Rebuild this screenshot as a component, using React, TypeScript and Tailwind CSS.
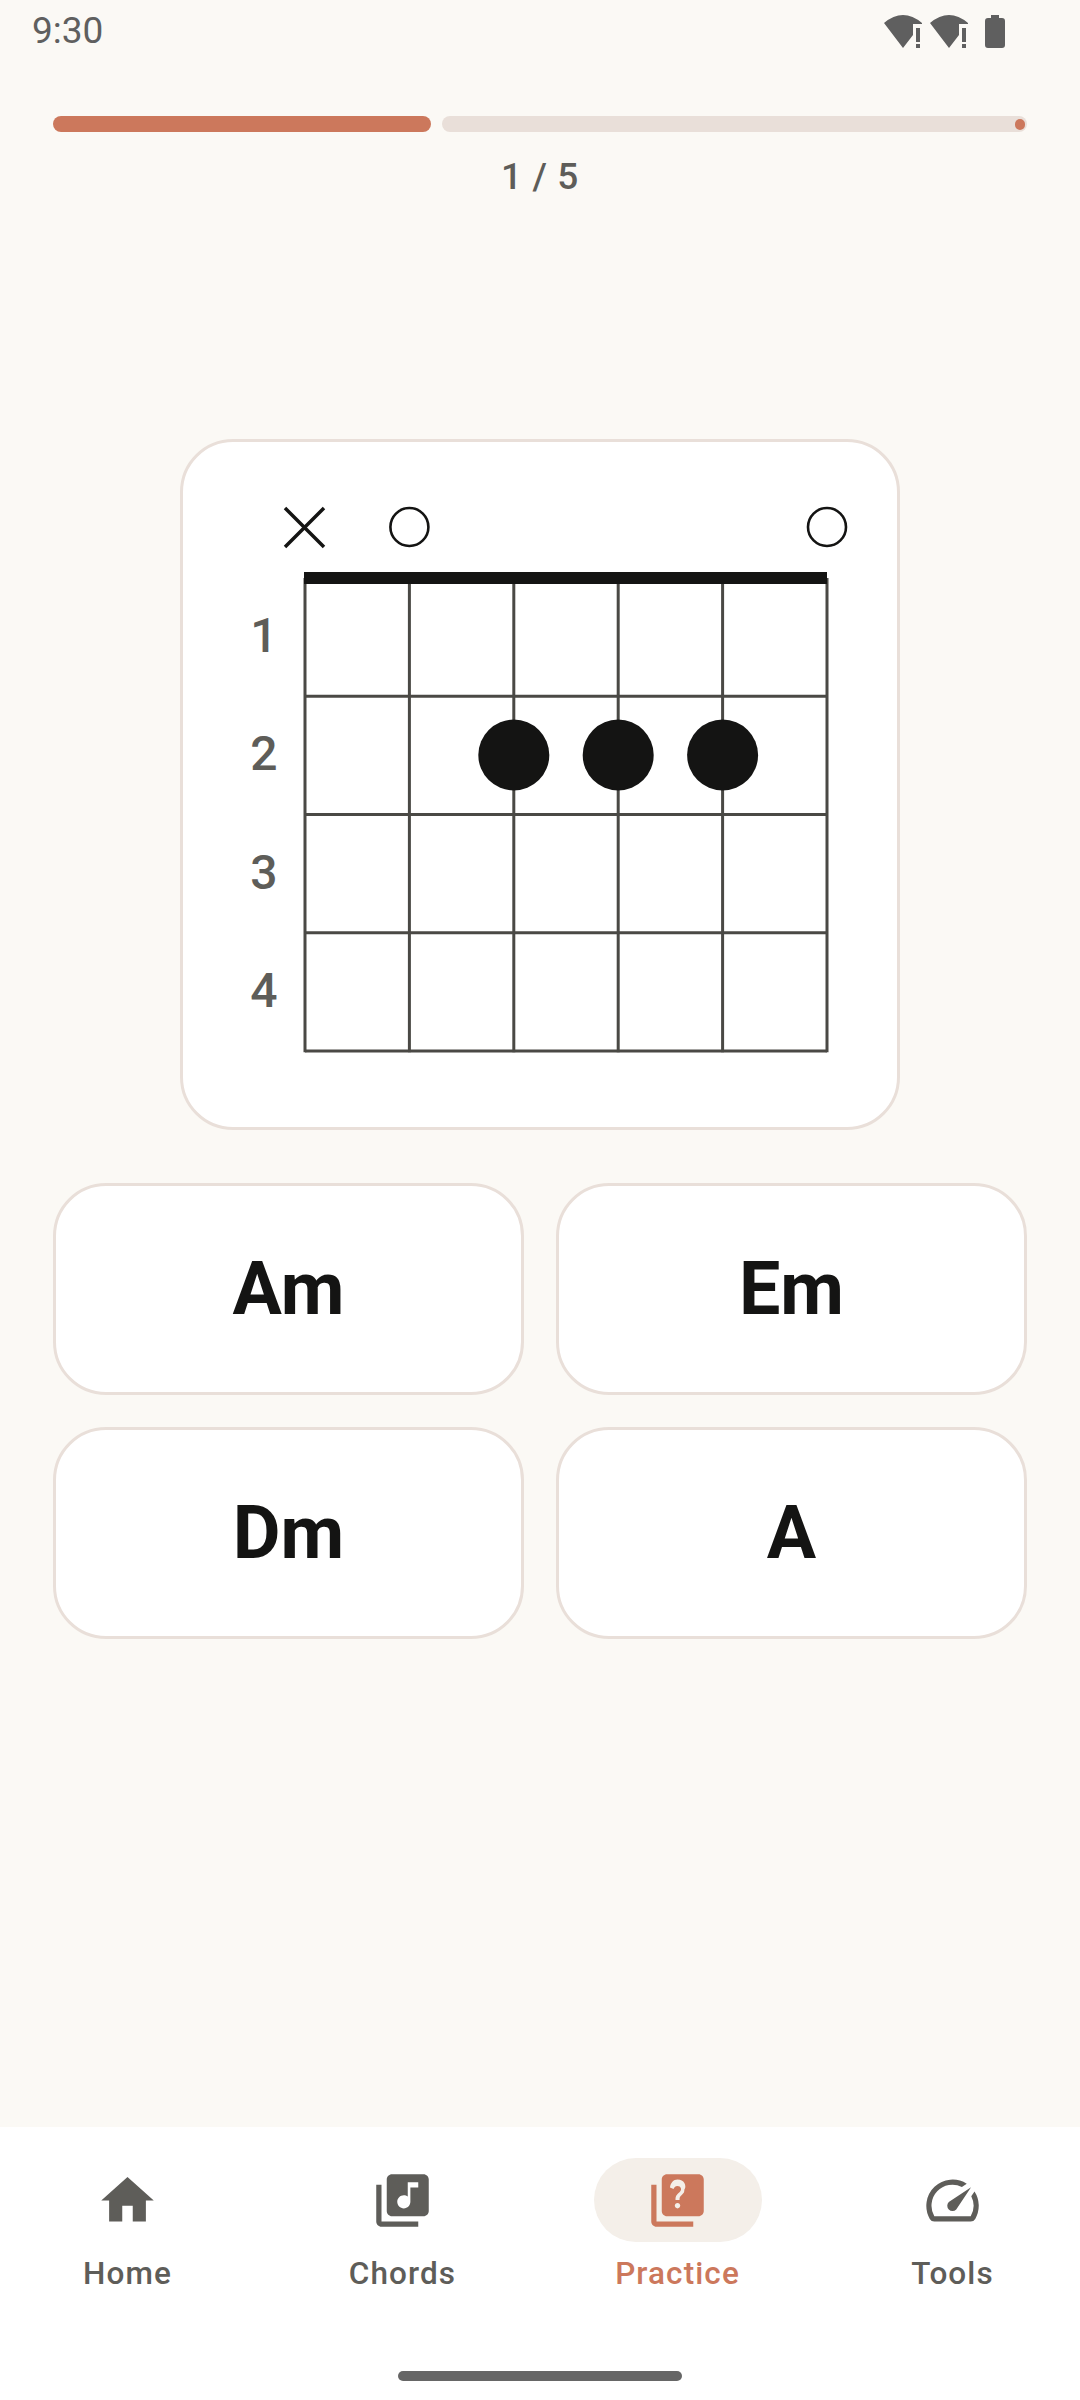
import React from 'react';

const TEXT_MUTED = '#5E5D59';
const INK = '#141413';

const stringXs = [122, 226.4, 330.8, 435.2, 539.6, 644];
const fretYs = [136, 254.25, 372.5, 490.75, 609];

const WifiAlert = () => (
  <svg width="38" height="33" viewBox="0 0 38 33" fill="#5F5F5F">
    <path d="M0 8 Q19 -8 38 8 L38 9 L29 9 L29 20 L19 33 Z" />
    <rect x="32" y="13" width="4" height="14" />
    <rect x="32" y="29" width="4" height="4" />
  </svg>
);

const StatusBar = () => (
  <div className="flex h-[64px] items-start justify-between pl-[32px] pr-[75px]">
    <span className="text-[37px] leading-[61px] text-[#5F5F5F]">9:30</span>
    <div className="flex items-start pt-[15px]">
      <WifiAlert />
      <div className="ml-2">
        <WifiAlert />
      </div>
      <svg className="ml-[17px]" width="20" height="33" viewBox="0 0 20 33" fill="#5F5F5F">
        <path d="M6 0h8v3h3a3 3 0 0 1 3 3v24a3 3 0 0 1-3 3H3a3 3 0 0 1-3-3V6a3 3 0 0 1 3-3h3z" />
      </svg>
    </div>
  </div>
);

const Progress = () => (
  <div className="mt-[52px] px-[53px]">
    <div className="flex h-4 gap-[11px]">
      <div className="w-[378px] rounded-full bg-[#CC785C]" />
      <div className="flex flex-1 items-center justify-end rounded-full bg-[#E9DFD9] pr-[2px]">
        <div className="h-[11px] w-[10px] rounded-full bg-[#CC785C]" />
      </div>
    </div>
    <p className="mt-[20px] text-center text-[37px] font-medium leading-[50px] tracking-[0.6px] text-[#5E5D59]">
      1 / 5
    </p>
  </div>
);

const ChordDiagram = () => (
  <div className="mx-auto mt-[237px] h-[691px] w-[720px] rounded-[53px] border-[3px] border-[#E9DFD9] bg-white">
    <svg width="714" height="685" viewBox="0 0 714 685">
      {/* muted / open markers */}
      <path d="M102 66l39 39M141 66l-39 39" stroke={INK} strokeWidth="3.5" />
      <circle cx={stringXs[1]} cy="85" r="19" fill="none" stroke={INK} strokeWidth="2.6" />
      <circle cx={stringXs[5]} cy="85" r="19" fill="none" stroke={INK} strokeWidth="2.6" />

      {stringXs.map((x) => (
        <line key={x} x1={x} x2={x} y1={fretYs[0]} y2={fretYs[4] + 1.3} stroke="#4A4945" strokeWidth="3" />
      ))}
      {fretYs.slice(1).map((y) => (
        <line key={y} x1={stringXs[0]} x2={stringXs[5]} y1={y} y2={y} stroke="#4A4945" strokeWidth="3" />
      ))}
      <rect x="121" y="130" width="523" height="12" fill={INK} />

      {[2, 3, 4].map((s) => (
        <circle key={s} cx={stringXs[s]} cy="313" r="35.5" fill={INK} />
      ))}

      {[1, 2, 3, 4].map((n, i) => (
        <text
          key={n}
          x="81"
          y={(fretYs[i] + fretYs[i + 1]) / 2 + 15}
          textAnchor="middle"
          fontSize="48"
          fontWeight="500"
          fill={TEXT_MUTED}
        >
          {n}
        </text>
      ))}
    </svg>
  </div>
);

const answers = ['Am', 'Em', 'Dm', 'A'];

const Answers = () => (
  <div className="mt-[53px] grid grid-cols-2 gap-x-[32px] gap-y-[32px] px-[53px]">
    {answers.map((a) => (
      <button
        key={a}
        className="flex h-[212px] items-center justify-center rounded-[53px] border-[3px] border-[#E9DFD9] bg-white text-[73.5px] font-bold text-[#141413]"
      >
        {a}
      </button>
    ))}
  </div>
);

const navItems = [
  {
    label: 'Home',
    d: 'M10 20v-6h4v6h5v-8h3L12 3 2 12h3v8z',
  },
  {
    label: 'Chords',
    d: 'M20 2H8c-1.1 0-2 .9-2 2v12c0 1.1.9 2 2 2h12c1.1 0 2-.9 2-2V4c0-1.1-.9-2-2-2zm-2 5h-3v5.5c0 1.38-1.12 2.5-2.5 2.5S10 13.88 10 12.5s1.12-2.5 2.5-2.5c.57 0 1.08.19 1.5.51V5h4v2zM4 6H2v14c0 1.1.9 2 2 2h14v-2H4V6z',
  },
  {
    label: 'Practice',
    active: true,
    d: 'M4 6H2v14c0 1.1.9 2 2 2h14v-2H4V6zm16-4H8c-1.1 0-2 .9-2 2v12c0 1.1.9 2 2 2h12c1.1 0 2-.9 2-2V4c0-1.1-.9-2-2-2zm-7.99 13c-.59 0-1.05-.47-1.05-1.05 0-.59.47-1.04 1.05-1.04.59 0 1.04.45 1.04 1.04-.01.58-.45 1.05-1.04 1.05zm2.5-6.17c-.63.93-1.23 1.21-1.56 1.81-.13.24-.18.4-.18 1.18h-1.52c0-.41-.06-1.08.26-1.65.41-.73 1.18-1.16 1.63-1.8.48-.68.21-1.94-1.14-1.94-.88 0-1.32.67-1.5 1.23l-1.37-.57C9.38 5.21 10.44 4 11.99 4c1.3 0 2.18.59 2.63 1.33.38.62.6 1.79.01 2.5z',
  },
  {
    label: 'Tools',
    d: 'M20.38 8.57l-1.23 1.85a8 8 0 0 1-.22 7.58H5.07A8 8 0 0 1 15.58 6.85l1.85-1.23A10 10 0 0 0 3.35 19a2 2 0 0 0 1.72 1h13.85a2 2 0 0 0 1.74-1 10 10 0 0 0-.27-10.44zm-9.79 6.84a2 2 0 0 0 2.83 0l5.66-8.49-8.49 5.66a2 2 0 0 0 0 2.83z',
  },
];

const BottomNav = () => (
  <div className="flex flex-1 flex-col bg-white">
    <div className="flex justify-between px-[43.5px] pt-[31px]">
      {navItems.map((item) => (
        <div key={item.label} className="flex w-[168px] flex-col items-center">
          <div
            className={`flex h-[84px] w-[168px] items-center justify-center rounded-full ${
              item.active ? 'bg-[#F4EFE9]' : ''
            }`}
          >
            <svg
              width="63"
              height="63"
              viewBox="0 0 24 24"
              fill={item.active ? '#CC785C' : TEXT_MUTED}
            >
              <path d={item.d} />
            </svg>
          </div>
          <span
            className={`mt-[11px] text-[31.5px] font-medium leading-[42px] tracking-[1.1px] ${
              item.active ? 'text-[#CC785C]' : 'text-[#5E5D59]'
            }`}
          >
            {item.label}
          </span>
        </div>
      ))}
    </div>
    <div className="mx-auto mt-[76px] h-[10px] w-[284px] rounded-full bg-[#666666]" />
  </div>
);

export default function App() {
  return (
    <div className="flex h-[2400px] w-[1080px] flex-col bg-[#FBF9F5] font-['Roboto',sans-serif]">
      <StatusBar />
      <Progress />
      <ChordDiagram />
      <Answers />
      <div className="h-[488px]" />
      <BottomNav />
    </div>
  );
}
